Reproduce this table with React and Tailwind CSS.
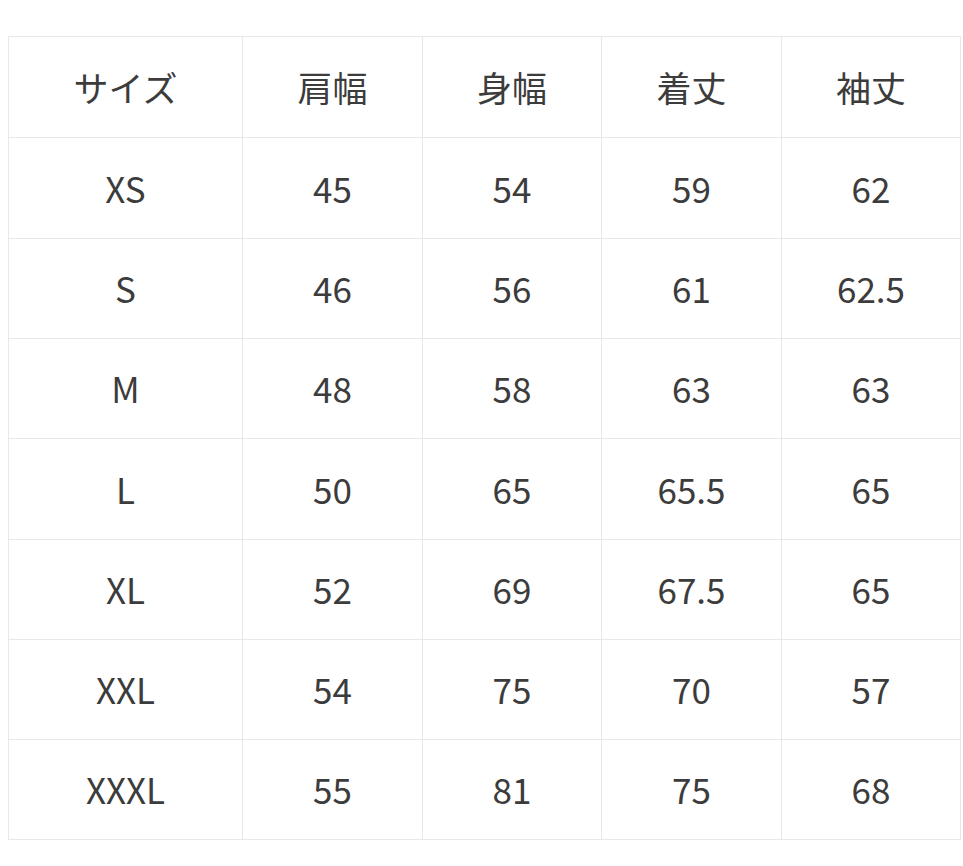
const headers = ["サイズ", "肩幅", "身幅", "着丈", "袖丈"];

const rows = [
  ["XS", "45", "54", "59", "62"],
  ["S", "46", "56", "61", "62.5"],
  ["M", "48", "58", "63", "63"],
  ["L", "50", "65", "65.5", "65"],
  ["XL", "52", "69", "67.5", "65"],
  ["XXL", "54", "75", "70", "57"],
  ["XXXL", "55", "81", "75", "68"],
];

const widths = ["w-[234px]", "w-[180px]", "w-[179px]", "w-[180px]", "w-[179px]"];
const heights = ["h-[101px]", "h-[100px]", "h-[100px]", "h-[101px]", "h-[100px]", "h-[100px]", "h-[100px]"];

export default function App() {
  return (
    <div
      className="min-h-[866px] bg-white pt-[36px] pl-[8px] text-[#3c3c3c]"
      style={{ fontFamily: '"Noto Sans CJK JP", "Noto Sans", sans-serif' }}
    >
      <table className="border-collapse table-fixed w-[952px] text-[35px] font-normal">
        <thead>
          <tr className="h-[101px]">
            {headers.map((h, i) => (
              <th key={h} className={`${widths[i]} border border-[#e8e8e8] text-center font-normal`}>
                {h}
              </th>
            ))}
          </tr>
        </thead>
        <tbody>
          {rows.map((r, ri) => (
            <tr key={r[0]} className={heights[ri]}>
              {r.map((c, i) => (
                <td key={i} className="border border-[#e8e8e8] text-center">
                  {c}
                </td>
              ))}
            </tr>
          ))}
        </tbody>
      </table>
    </div>
  );
}
